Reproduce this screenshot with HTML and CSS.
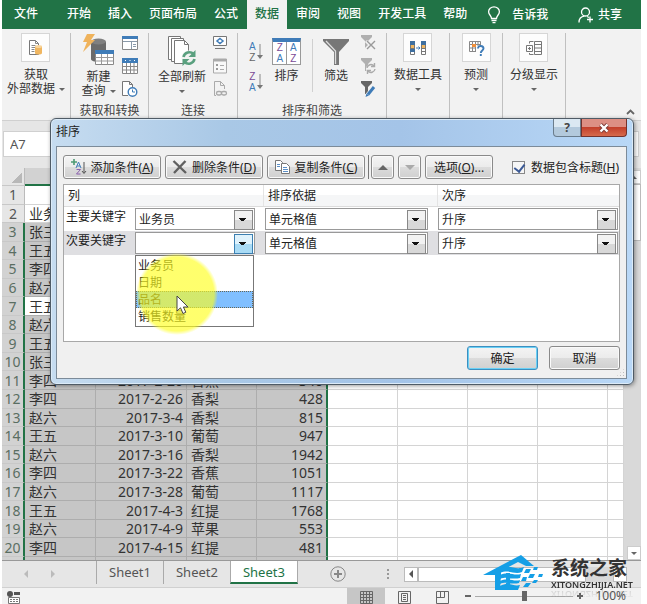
FILE: index.html
```html
<!DOCTYPE html>
<html lang="zh-CN">
<head>
    <meta charset="UTF-8">
    <meta name="viewport" content="width=device-width, initial-scale=1.0">
    <title>排序</title>
    <link rel="stylesheet" href="styles.css">
</head>
<body>
    <div class="app">
        <!-- tabs -->
        <nav class="tabs">
            <a href="#" class="tab file">文件</a>
            <a href="#" class="tab">开始</a>
            <a href="#" class="tab">插入</a>
            <a href="#" class="tab">页面布局</a>
            <a href="#" class="tab">公式</a>
            <a href="#" class="tab active">数据</a>
            <a href="#" class="tab">审阅</a>
            <a href="#" class="tab">视图</a>
            <a href="#" class="tab">开发工具</a>
            <a href="#" class="tab">帮助</a>
            <a href="#" class="tell">
                <svg width="14" height="18" viewBox="0 0 14 18" fill="none" stroke="#fff" stroke-width="1.3"><path d="M4.5 12.5C4.5 9.5 1.6 9 1.6 5.8a5.4 5 0 0 1 10.8 0c0 3.2-2.9 3.7-2.9 6.7zM4.5 14.5h5M5.5 16.6h3"/></svg>
                告诉我
            </a>
            <a href="#" class="share">
                <svg width="16" height="16" viewBox="0 0 16 16" fill="none" stroke="#fff" stroke-width="1.3"><circle cx="7.5" cy="5" r="4"/><path d="M1 15.5c0-4 2.500-6 5.500-6.300M9 9.500l2 1M12 9.500v6M9 12.500h6"/></svg>
                共享
            </a>
        </nav>

        <!-- ribbon -->
        <div class="ribbon">
            <section class="group g-ext">
                <div class="tools">
                    <button class="cmd">
                        <span class="tile"><svg width="18" height="18" viewBox="0 0 18 18"><path d="M2.500 1.500h6l3 3v11h-9z" fill="#fff" stroke="#777"/><path d="M8.500 1.500v3h3M4.500 6.500h4M4.500 8.500h4M4.500 10.500h3M4.500 12.500h3" fill="none" stroke="#888"/><path d="M8 7.500v6.500c0 2 7 2 7 0V7.500z" fill="#f0b660"/><ellipse cx="11.500" cy="7.500" rx="3.500" ry="1.500" fill="#f8d49a"/></svg></span>
                        <span>获取</span>
                        <span class="drop">外部数据<i class="arrow"></i></span>
                    </button>
                </div>
            </section>
            <section class="group g-get">
                <div class="tools">
                    <button class="cmd wide">
                        <svg width="34" height="34" viewBox="0 0 34 34"><path d="M10 9v17c0 4 15 4 15 0V9z" fill="#6b6b6b"/><ellipse cx="17.500" cy="8.500" rx="7.500" ry="3" fill="#808080"/><path d="M6 1h8l-4 6h4L2 19l4-10H2z" fill="#efb35c"/><path d="M14.500 17.500h18v14h-18z" fill="#fff" stroke="#888"/><path d="M14 17h19v4H14z" fill="#3f7cb8"/><path d="M14.500 24.500h18M14.500 28h18M20.500 21v10.500M26.500 21v10.500" stroke="#999" fill="none"/></svg>
                        <span>新建</span>
                        <span class="drop">查询<i class="arrow"></i></span>
                    </button>
                    <div class="stack">
                        <button aria-label="显示查询"><svg width="16" height="16" viewBox="0 0 16 16"><path d="M.5 1.500h15v13H.5z" fill="#fff" stroke="#888"/><path d="M0 1h16v3H0z" fill="#3f7cb8"/><path d="M1 6.500h14M9.500 7v7M11 9.500h3M11 11.500h3" stroke="#8a9aaa" fill="none"/></svg></button>
                        <button aria-label="从表格"><svg width="16" height="16" viewBox="0 0 16 16"><path d="M.5.5h15v15H.5z" fill="#fff" stroke="#888"/><path d="M0 0h16v5H0z" fill="#3f7cb8"/><path d="M3 2.500h1M7.500 2.500h1M12 2.500h1" stroke="#fff"/><path d="M0 8.500h16M0 12h16M4.500 5v11M8.500 5v11M12 5v11" stroke="#888" fill="none"/></svg></button>
                        <button aria-label="最近使用的源"><svg width="16" height="16" viewBox="0 0 16 16"><path d="M6 14.500H.5V.5h7l3 3v3M7.500.5v3h3" fill="#fff" stroke="#777"/><circle cx="10.500" cy="11" r="4.300" fill="#fff" stroke="#3f7cb8" stroke-width="1.400"/><path d="M10.500 8.500V11h2.500" fill="none" stroke="#3f7cb8"/></svg></button>
                    </div>
                </div>
                <h2>获取和转换</h2>
            </section>
            <section class="group g-conn">
                <div class="tools">
                    <button class="cmd wide">
                        <svg width="34" height="34" viewBox="0 0 34 34" fill="#fff" stroke="#777"><path d="M3.500 26.500V3.500h12v23z"/><path d="M6.500 28.500v-23h12v23z"/><path d="M9.500 30.500v-23h10l4 4v19z"/><path d="M19.500 7.500v4h4" fill="none"/><circle cx="24" cy="25" r="7.500" stroke="none" fill="#f2f2f2"/><g fill="none" stroke="#5aa07f" stroke-width="2.600"><path d="M18.500 24a6 6 0 0 1 10-3M29.500 26a6 6 0 0 1-10 3"/></g><path d="M30.500 17v7h-7zM17.500 33v-7h7z" fill="#5aa07f" stroke="none"/></svg>
                        <span>全部刷新</span>
                        <span><i class="arrow"></i></span>
                    </button>
                    <div class="stack">
                        <button aria-label="连接"><svg width="16" height="16" viewBox="0 0 16 16"><path d="M1.500 1.500h13v9h-13z" fill="#fff" stroke="#777"/><path d="M3 13.500h10" stroke="#777"/><path d="M8 3.500l3 2.500-3 2.500L5 6z" fill="none" stroke="#3f7cb8" stroke-width="1.500"/></svg></button>
                        <button aria-label="属性"><svg width="16" height="16" viewBox="0 0 16 16"><path d="M1.500 1h13v14h-13z" fill="#f8f8f8" stroke="#aaa"/><path d="M1 1h14v2.500H1z" fill="#aaa"/><path d="M4 7h2M4 11h2" stroke="#999" stroke-width="2"/><path d="M8 7.500h4M8 11.500h4" stroke="#aaa"/></svg></button>
                        <button aria-label="编辑链接"><svg width="16" height="16" viewBox="0 0 16 16" fill="none" stroke="#aaa"><path d="M4 14.500H2.500V.5h6l4 4V8M8.500.5v4h4"/><rect x="4.500" y="10.500" width="5" height="3.500" rx="1.700" stroke-width="1.300"/><rect x="9.500" y="10.500" width="5" height="3.500" rx="1.700" stroke-width="1.300"/></svg></button>
                    </div>
                </div>
                <h2>连接</h2>
            </section>
            <section class="group g-sort">
                <div class="tools">
                    <div class="az">
                        <button aria-label="升序"><span><b class="blue">A</b><b>Z</b></span><svg width="6" height="16" viewBox="0 0 6 16"><path d="M3 0v13" stroke="#888"/><path d="M0 11h6l-3 4z" fill="#777"/></svg></button>
                        <button aria-label="降序"><span><b class="purple">Z</b><b class="blue">A</b></span><svg width="6" height="16" viewBox="0 0 6 16"><path d="M3 0v13" stroke="#888"/><path d="M0 11h6l-3 4z" fill="#777"/></svg></button>
                    </div>
                    <button class="cmd sort">
                        <span class="sort-icon"><b class="purple">Z</b><b class="blue">A</b><b class="blue">A</b><b class="purple">Z</b></span>
                        <span>排序</span>
                    </button>
                    <span class="rule"></span>
                    <button class="cmd sort">
                        <svg width="28" height="30" viewBox="0 0 28 30"><path d="M1 2h26v2L17 15v13h-5V15L1 4z" fill="#777"/><path d="M4 4l9.500 10v13" fill="none" stroke="#ddd" stroke-width="1.300"/></svg>
                        <span>筛选</span>
                    </button>
                    <div class="stack">
                        <button aria-label="清除"><svg width="16" height="16" viewBox="0 0 16 16"><path d="M1 0h11v2L8 6v7H5V6L1 2z" fill="#b0b0b0"/><path d="M6 6l8 8M14 6l-8 8" stroke="#f2f2f2" stroke-width="3"/><path d="M7 6l8 8M15 6l-8 8" stroke="#999" stroke-width="1.400"/></svg></button>
                        <button aria-label="重新应用"><svg width="16" height="16" viewBox="0 0 16 16"><path d="M1 0h11v2L8 6v7H5V6L1 2z" fill="#b0b0b0"/><circle cx="11" cy="11" r="5" fill="#f2f2f2"/><path d="M7 10a4 4 0 0 1 7-2M15 11a4 4 0 0 1-7 2M14.500 5v3.500H11M7.500 16v-3.500H11" fill="none" stroke="#aaa" stroke-width="1.400"/></svg></button>
                        <button aria-label="高级"><svg width="16" height="16" viewBox="0 0 16 16"><path d="M1 0h11v2L8 6v7H5V6L1 2z" fill="#666"/><path d="M7.500 14.500l6.500-8" stroke="#f2f2f2" stroke-width="5"/><path d="M8 13.500L14 6" stroke="#3f7cb8" stroke-width="3"/><path d="M5.500 16l1-3.500 2.500 2z" fill="#3f7cb8"/></svg></button>
                    </div>
                </div>
                <h2>排序和筛选</h2>
            </section>
            <section class="group g-data">
                <div class="tools">
                    <button class="cmd">
                        <span class="tile"><svg width="18" height="18" viewBox="0 0 18 18"><path d="M1.500 2.500h4v13h-4zM12.500 2.500h4v13h-4z" fill="#fff" stroke="#777"/><path d="M1 2h5v4H1zM12 2h5v4h-5zM1 10h5v3H1z" fill="#3f6f9f"/><path d="M2 6h3v3H2zM13 6h3v3h-3z" fill="#f0b660"/><path d="M7 9h4M9.500 7.500L11 9l-1.500 1.500" fill="none" stroke="#3f7cb8"/><path d="M1 9.500h5M12 9.500h5M12 12.500h5" stroke="#777"/></svg></span>
                        <span>数据工具</span>
                        <span><i class="arrow"></i></span>
                    </button>
                </div>
            </section>
            <section class="group g-cast">
                <div class="tools">
                    <button class="cmd">
                        <span class="tile"><svg width="18" height="18" viewBox="0 0 18 18"><path d="M2 2h12v11H2z" fill="#fff"/><path d="M2.500 2.500h11v10h-11zM5.500 2v11M8.500 2v11M11 2v11M2 5.500h12M2 9h12" fill="none" stroke="#888"/><path d="M5 5h4v3H5z" fill="#f0903c"/><path d="M9 7h9v11H9z" fill="#fdfdfd"/><path d="M11 9.500c0-3.500 5.500-3 5.500 0 0 2-2.700 2-2.700 4.500M13.800 15v2" fill="none" stroke="#3f7cb8" stroke-width="1.900"/></svg></span>
                        <span>预测</span>
                        <span><i class="arrow"></i></span>
                    </button>
                </div>
            </section>
            <section class="group g-outline">
                <div class="tools">
                    <button class="cmd">
                        <span class="tile"><svg width="18" height="18" viewBox="0 0 18 18" fill="none" stroke="#777"><path d="M1.500 6.500h6v6h-6zM3 9.500h3M4.500 8v3M4.500 4.500V2.500h4M4.500 14v1.500h4"/><path d="M9.500 2.500h7v13h-7zM9.500 5.500h7M9.500 9h7M9.500 12.500h7"/></svg></span>
                        <span>分级显示</span>
                        <span><i class="arrow"></i></span>
                    </button>
                </div>
            </section>
            <button class="collapse" aria-label="折叠功能区"><svg width="9" height="6" viewBox="0 0 9 6"><path d="M1 5l3.500-3.500L8 5" fill="none" stroke="#666" stroke-width="1.800"/></svg></button>
        </div>

        <div class="formula">
            <input class="name-box" value="A7" aria-label="名称框">
            <input class="fx" aria-label="编辑栏">
        </div>

        <!-- sheet -->
        <div class="sheet">
            <table>
                <colgroup><col class="c-num"><col class="c-a"><col class="c-b"><col class="c-c"><col class="c-d"><col class="c-e"><col class="c-e"><col class="c-e"><col class="c-e"><col></colgroup>
                <thead>
                    <tr><th class="corner"></th><th class="on"></th><th class="on"></th><th class="on"></th><th class="on"></th><th></th><th></th><th></th><th></th><th></th></tr>
                </thead>
                <tbody>
                    <tr><th>1</th><td></td><td></td><td></td><td></td><td></td><td></td><td></td><td></td><td></td></tr>
                    <tr><th>2</th><td>业务员</td><td></td><td></td><td></td><td></td><td></td><td></td><td></td><td></td></tr>
                    <tr class="sel"><th>3</th><td>张三</td><td></td><td></td><td></td><td></td><td></td><td></td><td></td><td></td></tr>
                    <tr class="sel"><th>4</th><td>王五</td><td></td><td></td><td></td><td></td><td></td><td></td><td></td><td></td></tr>
                    <tr class="sel"><th>5</th><td>李四</td><td></td><td></td><td></td><td></td><td></td><td></td><td></td><td></td></tr>
                    <tr class="sel"><th>6</th><td>赵六</td><td></td><td></td><td></td><td></td><td></td><td></td><td></td><td></td></tr>
                    <tr class="sel"><th>7</th><td class="cell-on">王五</td><td></td><td></td><td></td><td></td><td></td><td></td><td></td><td></td></tr>
                    <tr class="sel"><th>8</th><td>赵六</td><td></td><td></td><td></td><td></td><td></td><td></td><td></td><td></td></tr>
                    <tr class="sel"><th>9</th><td>王五</td><td></td><td></td><td></td><td></td><td></td><td></td><td></td><td></td></tr>
                    <tr class="sel"><th>10</th><td>张三</td><td></td><td></td><td></td><td></td><td></td><td></td><td></td><td></td></tr>
                    <tr class="sel"><th>11</th><td>李四</td><td>2017-2-20</td><td>香蕉</td><td>340</td><td></td><td></td><td></td><td></td><td></td></tr>
                    <tr class="sel"><th>12</th><td>李四</td><td>2017-2-26</td><td>香梨</td><td>428</td><td></td><td></td><td></td><td></td><td></td></tr>
                    <tr class="sel"><th>13</th><td>赵六</td><td>2017-3-4</td><td>香梨</td><td>815</td><td></td><td></td><td></td><td></td><td></td></tr>
                    <tr class="sel"><th>14</th><td>王五</td><td>2017-3-10</td><td>葡萄</td><td>947</td><td></td><td></td><td></td><td></td><td></td></tr>
                    <tr class="sel"><th>15</th><td>赵六</td><td>2017-3-16</td><td>香梨</td><td>1942</td><td></td><td></td><td></td><td></td><td></td></tr>
                    <tr class="sel"><th>16</th><td>李四</td><td>2017-3-22</td><td>香蕉</td><td>1051</td><td></td><td></td><td></td><td></td><td></td></tr>
                    <tr class="sel"><th>17</th><td>赵六</td><td>2017-3-28</td><td>葡萄</td><td>1117</td><td></td><td></td><td></td><td></td><td></td></tr>
                    <tr class="sel"><th>18</th><td>王五</td><td>2017-4-3</td><td>红提</td><td>1768</td><td></td><td></td><td></td><td></td><td></td></tr>
                    <tr class="sel"><th>19</th><td>赵六</td><td>2017-4-9</td><td>苹果</td><td>553</td><td></td><td></td><td></td><td></td><td></td></tr>
                    <tr class="sel"><th>20</th><td>李四</td><td>2017-4-15</td><td>红提</td><td>481</td><td></td><td></td><td></td><td></td><td></td></tr>
                    <tr class="sel last"><th></th><td></td><td></td><td></td><td></td><td></td><td></td><td></td><td></td><td></td></tr>
                </tbody>
            </table>
            <div class="vscroll">
                <button aria-label="向上"><i class="arrow up"></i></button>
                <span class="vthumb"></span>
                <button class="down" aria-label="向下"><i class="arrow"></i></button>
            </div>
        </div>

        <div class="sheetbar">
            <div class="nav">
                <button aria-label="上一个"><i class="tri left"></i></button>
                <button aria-label="下一个"><i class="tri right"></i></button>
            </div>
            <a href="#" class="stab">Sheet1</a>
            <a href="#" class="stab">Sheet2</a>
            <a href="#" class="stab current">Sheet3</a>
            <button class="add" aria-label="新工作表"><svg width="16" height="16" viewBox="0 0 16 16" fill="none" stroke="#888"><circle cx="8" cy="8" r="7.200"/><path d="M8 4v8M4 8h8" stroke-width="2"/></svg></button>
            <span class="dots"></span>
            <div class="hscroll">
                <button aria-label="向左"><i class="tri left dark"></i></button>
                <span class="hthumb"></span>
                <button aria-label="向右"><i class="tri right dark"></i></button>
            </div>
        </div>

        <div class="status">
            <button class="macro" aria-label="录制宏"><svg width="13" height="13" viewBox="0 0 13 13"><circle cx="3" cy="3" r="3" fill="#555"/><path d="M7 1h6v3H7z" fill="#555"/><path d="M1.500 6.500h11v6h-11z" fill="#fff" stroke="#777"/><path d="M3 8.500h8M3 10.500h8" stroke="#777" stroke-dasharray="2 1"/></svg></button>
            <button class="view current" aria-label="普通"><svg width="13" height="13" viewBox="0 0 13 13" fill="none" stroke="#666"><path d="M.5.5h12v12H.5zM3.500 0v13M6.500 0v13M9.500 0v13M0 3.500h13M0 6.500h13M0 9.500h13"/></svg></button>
            <button class="view" aria-label="页面布局"><svg width="13" height="13" viewBox="0 0 13 13" fill="none" stroke="#666"><path d="M.5.5h12v12H.5zM3.500 2.500h6v8h-6zM5 4.500h3M5 6.500h3M5 8.500h3"/></svg></button>
            <button class="view" aria-label="分页预览"><svg width="13" height="13" viewBox="0 0 13 13" fill="none" stroke="#666"><path d="M.5.500h12v12H.5zM4.500.5v6M8.500.5v6M.5 6.500h8"/></svg></button>
            <div class="zoom">
                <span class="minus"></span>
                <input type="range" min="10" max="190" value="100" aria-label="缩放">
                <span class="plus"></span>
                <span>100%</span>
            </div>
        </div>

        <!-- sort dialog -->
        <div class="dialog" role="dialog" aria-label="排序">
            <div class="titlebar">
                <h1>排序</h1>
                <button class="help" aria-label="帮助">?</button>
                <button class="close" aria-label="关闭"><svg width="12" height="10" viewBox="0 0 12 10"><path d="M2.500 1.500l7 7M9.500 1.500l-7 7" stroke="#7a3a36" stroke-width="4"/><path d="M2.500 1.500l7 7M9.500 1.500l-7 7" stroke="#fff" stroke-width="2.400"/></svg></button>
            </div>
            <div class="panel">
                <div class="toolbar">
                    <button class="btn main"><svg width="16" height="16" viewBox="0 0 16 16" fill="none"><path d="M3 0v6M0 3h6" stroke="#4e9a74" stroke-width="1.600"/><path d="M5 9l2.500-6L10 9M6 7h3" stroke="#3f7cb8"/><path d="M5.500 10.500h4l-4 4.500h4" stroke="#8a5fae"/><path d="M13 3v11M11 12l2 2.500 2-2.500" stroke="#555"/></svg><span>添加条件(<u>A</u>)</span></button>
                    <button class="btn main"><svg width="16" height="14" viewBox="0 0 16 14"><path d="M1.500 1L14 13M13.500 1L2 13" stroke="#606060" stroke-width="2.400"/></svg><span>删除条件(<u>D</u>)</span></button>
                    <button class="btn main"><svg width="16" height="14" viewBox="0 0 16 14" fill="#fff" stroke="#777"><path d="M.5.500h5l2 2v8h-7z"/><path d="M6.500 3.500h5l3 3v7h-8z"/><path d="M2 4.500h3M2 6.500h3M8 7.500h4M8 9.500h5M8 11.500h5" stroke="#5b8fc7"/></svg><span>复制条件(<u>C</u>)</span></button>
                    <span class="vline"></span>
                    <button class="btn sq" aria-label="上移"><i class="mark up"></i></button>
                    <button class="btn sq" aria-label="下移"><i class="mark down"></i></button>
                    <button class="btn opt"><span>选项(<u>O</u>)...</span></button>
                    <label class="check"><input type="checkbox" checked><span>数据包含标题(<u>H</u>)</span></label>
                </div>
                <div class="levels">
                    <div class="row head"><span>列</span><span>排序依据</span><span>次序</span></div>
                    <div class="row">
                        <label for="key1">主要关键字</label>
                        <div class="combo"><select id="key1"><option>业务员</option></select></div>
                        <div class="combo"><select aria-label="排序依据"><option>单元格值</option></select></div>
                        <div class="combo"><select aria-label="次序"><option>升序</option></select></div>
                    </div>
                    <div class="row picked">
                        <label for="key2">次要关键字</label>
                        <div class="combo open">
                            <select id="key2"><option></option></select>
                            <ul class="menu">
                                <li>业务员</li>
                                <li>日期</li>
                                <li class="hover">品名</li>
                                <li>销售数量</li>
                            </ul>
                            <span class="glow"></span>
                            <svg class="pointer" width="14" height="20" viewBox="0 0 14 20"><path d="M1 1v15l3.500-3.200L7 18.500l2.800-1.200L7.400 12H12z" fill="#fff" stroke="#444"/></svg>
                        </div>
                        <div class="combo"><select aria-label="排序依据"><option>单元格值</option></select></div>
                        <div class="combo"><select aria-label="次序"><option>升序</option></select></div>
                    </div>
                </div>
                <div class="actions">
                    <button class="btn ok">确定</button>
                    <button class="btn">取消</button>
                </div>
                <span class="grip"></span>
            </div>
        </div>

        <!-- site mark -->
        <div class="mark-site">
            <svg width="62" height="38" viewBox="0 0 62 38"><path d="M0 20L38 0l13 11H43l-8-4-17 9v4H0z" fill="#159fe6"/><path d="M12 20h6l-1 15h-5zM17 14c9-6 15 2 24-2l-2 5c-8 3-13-3-22 1zM17 31c9-5 13 1 20-1l-2 5H13z" fill="#159fe6"/><path d="M17 20c8-4 13 1 21-1l-1 4c-8 2-12-2-20 1zM17 26c8-4 13 1 20-1l-1 3c-8 2-12-2-19 1zM23 18h4v15h-4z" fill="#159fe6"/><path d="M43 14h5l-2 4h-5zM51 12h4l-1 3h-4zM47 19h5l-2 4h-5zM56 19h4l-1 3h-4zM40 22h4l-1 4h-5zM51 25h4l-2 3h-4zM43 28h5l-3 4h-5z" fill="#159fe6"/></svg>
            <div class="mark-text">
                <strong>系统之家</strong>
                <span>XITONGZHIJIA.NET</span>
            </div>
        </div>
    </div>
</body>
</html>
```
FILE: styles.css
```css
* {
    box-sizing: border-box;
}

body {
    margin: 0;
    background: #fff;
    font-family: "Noto Sans", "Noto Sans CJK SC", sans-serif;
    font-size: 12px;
    color: #444;
}

button {
    font: inherit;
    color: inherit;
    border: none;
    background: none;
    padding: 0;
    cursor: pointer;
}

a {
    color: inherit;
    text-decoration: none;
}

svg {
    display: block;
    flex: none;
}

h1, h2 {
    margin: 0;
    font-size: 12px;
    font-weight: normal;
}

.app {
    position: relative;
    display: flex;
    flex-direction: column;
    height: 100vh;
    margin: 0 6px 0 2px;
    overflow: hidden;
    background: #e6e6e6;
}

.arrow {
    display: inline-block;
    border: 3px solid transparent;
    border-top-color: #666;
    border-bottom: none;
    vertical-align: middle;
}

.arrow.up {
    border-top: none;
    border-bottom: 3px solid #666;
}

/* tabs */
.tabs {
    flex: none;
    display: flex;
    gap: 1px;
    height: 29px;
    padding-right: 19px;
    background: #217346;
    color: #fff;
    font-weight: 500;
    line-height: 27px;
}

.tab {
    padding: 0 8px;
}

.tab.file {
    padding: 0 20px 0 12px;
}

.tab.active {
    background: #f2f2f2;
    color: #217346;
}

.tell, .share {
    display: flex;
    align-items: center;
    gap: 11px;
    margin-left: 11px;
}

.share {
    gap: 4px;
    margin-left: auto;
}

/* ribbon */
.ribbon {
    flex: none;
    display: flex;
    height: 92px;
    padding: 4px 0 2px;
    background: #f2f2f2;
    border-bottom: 1px solid #d0d0d0;
}

.group {
    display: flex;
    flex-direction: column;
    justify-content: space-between;
    border-right: 1px solid #c0c0c0;
}

.group h2 {
    text-align: center;
    line-height: 14px;
}

.g-ext { width: 69px; }
.g-get { width: 78px; }
.g-conn { width: 89px; }
.g-sort { width: 149px; }
.g-data { width: 63px; }
.g-cast { width: 53px; }
.g-outline { width: 63px; }

.tools {
    display: flex;
    justify-content: center;
}

.g-get .tools, .g-conn .tools {
    gap: 6px;
}

.cmd {
    display: flex;
    flex-direction: column;
    align-items: center;
    line-height: 14px;
    white-space: nowrap;
    color: #333;
}

.cmd.wide svg {
    margin-bottom: 3px;
}

.drop {
    display: flex;
    align-items: center;
    gap: 4px;
}

.tile {
    display: flex;
    align-items: center;
    justify-content: center;
    width: 29px;
    height: 29px;
    margin-bottom: 6px;
    border: 1px solid #d6d6d6;
    background: #fdfdfd;
}

.stack {
    display: flex;
    flex-direction: column;
    gap: 7px;
    padding-top: 2px;
}

.g-sort .tools {
    justify-content: flex-start;
    padding-left: 11px;
}

.az {
    display: flex;
    flex-direction: column;
    gap: 8px;
    width: 14px;
    padding-top: 8px;
    font-family: "Liberation Sans", sans-serif;
}

.az button {
    display: flex;
    align-items: center;
    gap: 1px;
    height: 22px;
}

.az b {
    display: block;
    font-size: 10px;
    line-height: 11px;
    font-weight: normal;
    color: #666;
}

.az .blue, .sort-icon .blue { color: #3f7cb8; }
.az .purple, .sort-icon .purple { color: #7a4a96; }

.cmd.sort {
    margin-left: 9px;
    padding-top: 4px;
}

.cmd.sort svg {
    margin-bottom: 2px;
}

.sort-icon {
    display: grid;
    grid-template-columns: 1fr 1fr;
    width: 29px;
    height: 27px;
    margin: 1px 0 4px;
    border: 1px solid #999;
    border-top: 4px solid #3f7cb8;
    background: linear-gradient(#999, #999) center / 1px 100% no-repeat #fff;
    font-family: "Liberation Sans", sans-serif;
    font-size: 10px;
    line-height: 11px;
}

.sort-icon b {
    font-weight: normal;
}

.rule {
    width: 1px;
    height: 53px;
    margin: 6px 0 0 11px;
    background: #d0d0d0;
}

.g-sort .stack {
    margin-left: 10px;
}

.collapse {
    align-self: flex-end;
    margin: 0 6px 3px auto;
}

/* name box and formula input */
.formula {
    flex: none;
    display: flex;
    gap: 8px;
    height: 47px;
    padding: 10px 2px 11px 1px;
}

.formula input {
    height: 26px;
    border: 1px solid #d0d0d0;
    padding: 0 6px;
    background: #fff;
    color: #555;
    font: inherit;
    font-size: 13px;
}

.name-box {
    width: 80px;
}

.fx {
    flex: 1;
    min-width: 0;
}

/* sheet */
.sheet {
    flex: 1;
    display: flex;
    min-height: 0;
}

table {
    flex: 1;
    table-layout: fixed;
    border-collapse: separate;
    border-spacing: 0;
    width: 100%;
    font-size: 14px;
    line-height: 17px;
    color: #333;
}

.c-num { width: 23px; }
.c-a { width: 71px; }
.c-b { width: 91px; }
.c-c { width: 70px; }
.c-d { width: 71px; }
.c-e { width: 70px; }

td {
    padding: 0 3px 0 4px;
    border-right: 1px solid #d4d4d4;
    border-bottom: 1px solid #d4d4d4;
    background: #fff;
    white-space: nowrap;
    overflow: hidden;
}

td:nth-child(3), td:nth-child(5) {
    text-align: right;
}

th {
    padding: 0;
    border-right: 1px solid #bbb;
    border-bottom: 1px solid #c8c8c8;
    background: #e6e6e6;
    font-weight: normal;
    color: #555;
}

thead th {
    height: 18px;
}

thead .on {
    background: #d2d2d2;
    border-bottom: 2px solid #217346;
}

thead .corner {
    background: linear-gradient(135deg, transparent 50%, #b8b8b8 50%) 9px 4px / 11px 11px no-repeat #e6e6e6;
}

.sel th {
    background: #d2d2d2;
    border-right: 2px solid #217346;
    color: #5a6e62;
}

.sel td:nth-child(-n+5) {
    background: #c6c6c6;
    border-color: #adadad;
}

.sel td:nth-child(5) {
    border-right: 2px solid #217346;
}

.sel td.cell-on {
    background: #fff;
}

.last th, .last td {
    height: 3px;
    border-bottom: none;
}

.vscroll {
    display: flex;
    flex-direction: column;
    width: 17px;
    padding: 2px 0 0 3px;
    background: #d9d9d9;
}

.vscroll button {
    display: flex;
    align-items: center;
    justify-content: center;
    height: 14px;
    background: #fff;
    border: 1px solid #ccc;
}

.vscroll .down {
    margin-top: auto;
}

.vthumb {
    height: 57px;
    background: #fff;
    border: 1px solid #bbb;
}

/* sheet tabs */
.sheetbar {
    flex: none;
    display: flex;
    align-items: center;
    height: 28px;
    border-top: 1px solid #999;
    border-bottom: 1px solid #d0d0d0;
    font-size: 13px;
}

.nav {
    display: flex;
    gap: 23px;
    width: 94px;
    padding-left: 22px;
}

.tri {
    display: block;
    border: 4px solid transparent;
}

.tri.left { border-right-color: #bbb; border-left: none; }
.tri.right { border-left-color: #bbb; border-right: none; }
.tri.left.dark { border-right-color: #555; }
.tri.right.dark { border-left-color: #555; }

.stab {
    align-self: flex-start;
    height: 23px;
    padding: 0 12px;
    border-left: 1px solid #aaa;
    line-height: 23px;
    color: #555;
}

.stab.current {
    background: #fff;
    color: #217346;
    border-right: 1px solid #aaa;
    border-bottom: 2px solid #217346;
}

.add {
    margin-left: 32px;
}

.dots {
    width: 2px;
    height: 10px;
    margin: 0 15px 0 41px;
    background: repeating-linear-gradient(#999 0 2px, transparent 2px 4px);
}

.hscroll {
    flex: 1;
    display: flex;
    height: 15px;
    margin-right: 14px;
    background: #d9d9d9;
}

.hscroll button {
    display: flex;
    align-items: center;
    justify-content: center;
    width: 14px;
    border: 1px solid #bbb;
    background: #fff;
}

.hthumb {
    flex: 1;
    margin-right: 27px;
    border: 1px solid #bbb;
    background: #fff;
}

/* status bar */
.status {
    flex: none;
    display: flex;
    height: 16px;
    background: #f2f2f2;
}

.macro {
    margin: 3px auto 0 5px;
    height: 13px;
}

.view {
    display: flex;
    justify-content: center;
    width: 38px;
    padding-top: 3px;
}

.view.current {
    background: #c6c6c6;
}

.zoom {
    display: flex;
    align-items: center;
    height: 16px;
    margin-left: 4px;
    padding-right: 15px;
    line-height: 16px;
    color: #555;
}

.minus, .plus {
    width: 6px;
    height: 2px;
    background: #666;
}

.plus {
    height: 6px;
    margin-right: 12px;
    background: linear-gradient(#666, #666) center / 6px 2px no-repeat, linear-gradient(#666, #666) center / 2px 6px no-repeat;
}

.zoom input {
    appearance: none;
    width: 98px;
    height: 10px;
    margin: 0 4px;
    background: linear-gradient(#aaa, #aaa) center / 100% 1px no-repeat;
}

.zoom input::-webkit-slider-thumb {
    appearance: none;
    width: 5px;
    height: 10px;
    background: #666;
}

/* dialog */
.dialog {
    position: absolute;
    top: 118px;
    left: 48px;
    right: 7px;
    padding: 0 6px 5px 5px;
    border: 1px solid #4f5b66;
    border-radius: 6px;
    background: linear-gradient(90deg, #c6dcf0 0, #a9c8e6 30%, #a4c4e8 60%, #b9d8f7 100%);
    box-shadow: inset 0 0 0 1px #dcebf8, 1px 1px 4px rgba(0, 0, 0, 0.4);
    color: #222;
}

.titlebar {
    display: flex;
    align-items: flex-start;
    height: 27px;
}

.titlebar h1 {
    flex: 1;
    line-height: 26px;
}

.help, .close {
    display: flex;
    align-items: center;
    justify-content: center;
    width: 28px;
    height: 18px;
    border: 1px solid #6a7c8c;
    border-top: none;
    border-radius: 0 0 0 4px;
    background: linear-gradient(#dbe8f2 50%, #b3c9dc 50%);
    font-weight: bold;
    color: #444;
}

.close {
    width: 46px;
    border-color: #74322c;
    border-radius: 0 0 4px 0;
    background: linear-gradient(#dd8f84 45%, #c3402c 50%, #d66a4c);
}

.panel {
    position: relative;
    padding: 8px 6px;
    border: 1px solid #7c8b99;
    background: #f0f0f0;
}

.toolbar {
    display: flex;
    align-items: center;
    gap: 4px;
}

.btn {
    display: flex;
    align-items: center;
    justify-content: center;
    height: 24px;
    border: 1px solid #8a8a8a;
    border-radius: 3px;
    background: linear-gradient(#f4f4f4, #ebebeb 50%, #dcdcdc 50%, #d0d0d0);
    box-shadow: inset 0 0 0 1px #fafafa;
    white-space: nowrap;
}

.btn.main {
    gap: 4px;
    width: 98px;
}

.btn.sq {
    width: 23px;
}

.btn.opt {
    width: 68px;
}

.vline {
    width: 1px;
    height: 24px;
    margin: 0 -2px 0 -1px;
    background: #777;
}

.mark {
    border: 5px solid transparent;
}

.mark.up { border-top: none; border-bottom-color: #666; }
.mark.down { border-bottom: none; border-top-color: #aaa; }

.check {
    display: flex;
    align-items: center;
    margin-left: auto;
    padding-right: 1px;
    white-space: nowrap;
}

.check input {
    appearance: none;
    width: 13px;
    height: 13px;
    margin: 0 6px 0 0;
    border: 1px solid #888;
    background: #f6f6f6;
}

.check input::after {
    content: "";
    display: block;
    width: 5px;
    height: 8px;
    margin: 0 0 0 3px;
    border: solid #3c5a96;
    border-width: 0 2px 2px 0;
    transform: rotate(38deg);
}

.levels {
    height: 158px;
    margin-top: 5px;
    border: 1px solid #a8a8a8;
    background: #fff;
}

.row {
    display: grid;
    grid-template-columns: 71px 130px 173px 1fr;
    align-items: start;
    height: 24px;
    padding: 1px 1px 0 0;
}

.row label {
    padding-left: 2px;
    line-height: 18px;
}

.row.head {
    grid-template-columns: 200px 174px 1fr;
    height: 22px;
    padding: 0;
    background: linear-gradient(#fff 50%, #f5f6f7 50%);
    border-bottom: 1px solid #dcdcdc;
    line-height: 21px;
}

.head span {
    padding-left: 4px;
    border-right: 1px solid #e4e4e4;
}

.head span:last-child {
    border: none;
}

.row.picked {
    background: #dfdfe2;
}

.combo {
    position: relative;
    height: 22px;
    margin-right: 10px;
    border: 1px solid #999;
    background: #fff;
}

.combo:last-child {
    margin-right: 0;
}

.combo select {
    appearance: none;
    display: block;
    width: 100%;
    height: 20px;
    padding: 0 20px 0 3px;
    border: none;
    background: none;
    color: #222;
    font: inherit;
}

.combo::after {
    content: "";
    position: absolute;
    top: 1px;
    right: 1px;
    width: 17px;
    height: 18px;
    border: 1px solid #888;
    background: conic-gradient(from -45deg at 50% 100%, #111 90deg, transparent 0) center / 7px 4px no-repeat, linear-gradient(#f2f2f2 50%, #d8d8d8 50%);
    background: linear-gradient(#111, #111) 4px 7px / 7px 1px no-repeat, linear-gradient(#111, #111) 5px 8px / 5px 1px no-repeat, linear-gradient(#111, #111) 6px 9px / 3px 1px no-repeat, linear-gradient(#f2f2f2 50%, #d8d8d8 50%);
    pointer-events: none;
}

.combo.open::after {
    border-color: #3c7fb1;
    background: linear-gradient(#111, #111) 4px 7px / 7px 1px no-repeat, linear-gradient(#111, #111) 5px 8px / 5px 1px no-repeat, linear-gradient(#111, #111) 6px 9px / 3px 1px no-repeat, linear-gradient(#dff2fc 50%, #a9dbf5 50%);
}

.menu {
    position: absolute;
    top: 22px;
    left: -1px;
    right: 0;
    z-index: 2;
    margin: 0;
    padding: 1px 0;
    border: 1px solid #777;
    background: #fff;
    list-style: none;
    line-height: 17px;
}

.menu li {
    padding-left: 2px;
}

.menu .hover {
    outline: 1px dotted #665;
    outline-offset: -1px;
    background: #80bfff;
}

.glow {
    position: absolute;
    top: 20px;
    left: 0;
    z-index: 3;
    width: 82px;
    height: 82px;
    border-radius: 50%;
    background: radial-gradient(closest-side, rgba(255, 255, 30, 0.65) 90%, rgba(255, 255, 30, 0));
}

.pointer {
    position: absolute;
    top: 62px;
    left: 40px;
    z-index: 4;
}

.actions {
    display: flex;
    justify-content: flex-end;
    gap: 11px;
    margin-top: 4px;
}

.actions .btn {
    width: 71px;
}

.actions .ok {
    border-color: #3c8fc0;
    box-shadow: inset 0 0 0 1px #6ad0f5;
}

.grip {
    position: absolute;
    right: 1px;
    bottom: 1px;
    width: 9px;
    height: 9px;
    background: radial-gradient(#bbb 1px, transparent 1px) 0 0 / 3px 3px;
    clip-path: polygon(100% 0, 100% 100%, 0 100%);
}

/* site mark */
.mark-site {
    position: absolute;
    right: 8px;
    bottom: 11px;
    display: flex;
    align-items: center;
    gap: 6px;
    color: #333;
}

.mark-text {
    display: flex;
    flex-direction: column;
    align-items: flex-start;
}

.mark-text strong {
    font-size: 19px;
    line-height: 22px;
}

.mark-text span {
    font-size: 9px;
    line-height: 12px;
    font-weight: 600;
    -webkit-box-reflect: below -3px linear-gradient(transparent, rgba(0, 0, 0, 0.2));
}
```
